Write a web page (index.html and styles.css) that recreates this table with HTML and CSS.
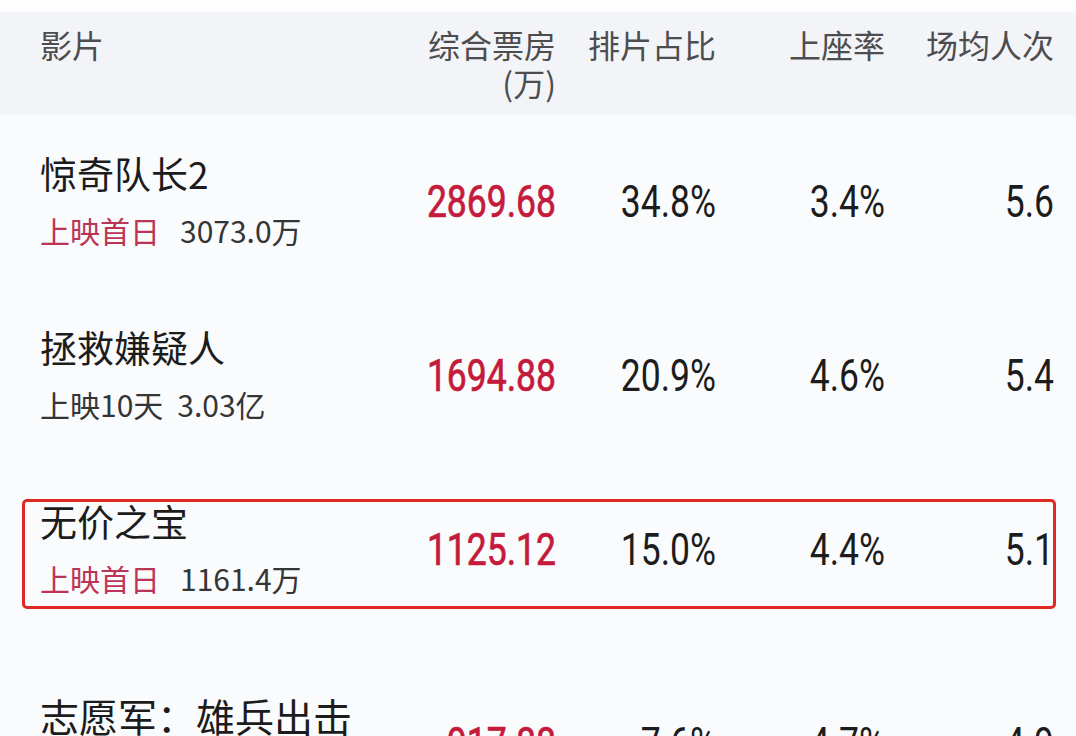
FILE: index.html
```html
<!DOCTYPE html>
<html lang="zh-CN">
<head>
<meta charset="utf-8">
<title>票房</title>
<link rel="stylesheet" href="styles.css">
</head>
<body>
<div class="page">
  <div class="table">
    <div class="row head">
      <div class="cell name">影片</div>
      <div class="cell num"><div class="hline">综合票房</div><div class="hline">(万)</div></div>
      <div class="cell num">排片占比</div>
      <div class="cell num">上座率</div>
      <div class="cell num">场均人次</div>
    </div>

    <div class="row">
      <div class="cell name">
        <div class="title">惊奇队长2</div>
        <div class="sub"><span class="tag">上映首日</span><span class="val">3073.0万</span></div>
      </div>
      <div class="cell num"><span class="digits red">2869.68</span></div>
      <div class="cell num"><span class="digits">34.8%</span></div>
      <div class="cell num"><span class="digits">3.4%</span></div>
      <div class="cell num"><span class="digits">5.6</span></div>
    </div>

    <div class="row">
      <div class="cell name">
        <div class="title">拯救嫌疑人</div>
        <div class="sub"><span class="tag plain">上映10天</span><span class="val">3.03亿</span></div>
      </div>
      <div class="cell num"><span class="digits red">1694.88</span></div>
      <div class="cell num"><span class="digits">20.9%</span></div>
      <div class="cell num"><span class="digits">4.6%</span></div>
      <div class="cell num"><span class="digits">5.4</span></div>
    </div>

    <div class="row highlight">
      <div class="cell name">
        <div class="title">无价之宝</div>
        <div class="sub"><span class="tag">上映首日</span><span class="val">1161.4万</span></div>
      </div>
      <div class="cell num"><span class="digits red">1125.12</span></div>
      <div class="cell num"><span class="digits">15.0%</span></div>
      <div class="cell num"><span class="digits">4.4%</span></div>
      <div class="cell num"><span class="digits">5.1</span></div>
    </div>

    <div class="row late">
      <div class="cell name">
        <div class="title large">志愿军：雄兵出击</div>
        <div class="sub"><span class="tag plain">上映21天</span><span class="val">7.12亿</span></div>
      </div>
      <div class="cell num"><span class="digits red">917.88</span></div>
      <div class="cell num"><span class="digits">7.6%</span></div>
      <div class="cell num"><span class="digits">4.7%</span></div>
      <div class="cell num"><span class="digits">4.9</span></div>
    </div>
  </div>
</div>
</body>
</html>
```

FILE: styles.css
```css
html, body {
  margin: 0;
  padding: 0;
  background: #fdfdfe;
}

body {
  width: 1076px;
  height: 736px;
  overflow: hidden;
  font-family: "Noto Sans CJK SC", "Noto Sans", sans-serif;
  color: #1e1e1e;
}

.page {
  padding-top: 12px;
}

.table {
  background: #fafbfd;
}

.row {
  position: relative;
  display: grid;
  grid-template-columns: 316px 200px 160px 169px 169px;
  padding: 0 22px 0 40px;
  height: 174px;
  align-items: center;
}

.row.head {
  height: auto;
  align-items: start;
  padding-top: 12px;
  padding-bottom: 15px;
  background: #f3f4f7;
  color: #4d4d4f;
  font-size: 32px;
  line-height: 40px;
}

.hline {
  height: 38px;
  line-height: 40px;
}

.cell.num {
  text-align: right;
}

.title {
  font-size: 37px;
  line-height: 57px;
  color: #1c1c1c;
  white-space: nowrap;
}

.title.large {
  font-size: 39px;
}

.sub {
  font-size: 30px;
  line-height: 57px;
  color: #353535;
  white-space: nowrap;
}

.tag {
  color: #bd3556;
  margin-right: 20px;
}

.tag.plain {
  color: #353535;
  margin-right: 14px;
}

.digits {
  display: inline-block;
  font-family: Roboto, "Liberation Sans", sans-serif;
  font-size: 35.5px;
  line-height: 40px;
  color: #1c1c1c;
  transform: scaleY(1.24);
  transform-origin: center;
}

.digits.red {
  color: #c41a3c;
  -webkit-text-stroke: 0.6px #c41a3c;
}

.row.highlight::after {
  content: "";
  position: absolute;
  left: 22px;
  right: 20px;
  top: 36px;
  bottom: 28px;
  border: 3px solid #de2a20;
  border-radius: 5px;
  pointer-events: none;
}

.row.late {
  margin-top: 20px;
}
```
